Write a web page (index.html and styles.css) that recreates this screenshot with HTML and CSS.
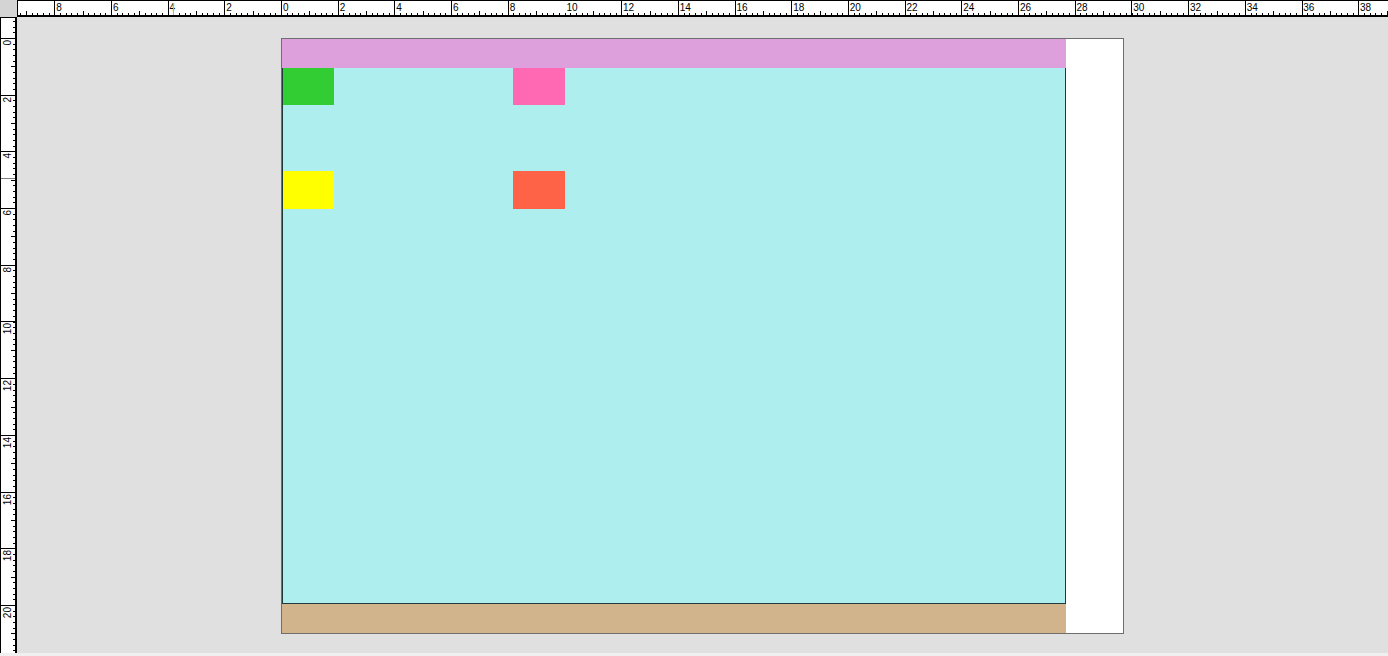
FILE: index.html
```html
<!DOCTYPE html>
<html>
<head>
<meta charset="utf-8">
<title>Page layout</title>
<link rel="stylesheet" href="styles.css">
</head>
<body>
<div class="app">
  <div class="corner"></div>
  <div class="ruler-top">
    <div class="labels-h">
      <span class="lab-h">8</span><span class="lab-h">6</span><span class="lab-h">4</span><span class="lab-h">2</span><span class="lab-h">0</span><span class="lab-h">2</span><span class="lab-h">4</span><span class="lab-h">6</span><span class="lab-h">8</span><span class="lab-h">10</span><span class="lab-h">12</span><span class="lab-h">14</span><span class="lab-h">16</span><span class="lab-h">18</span><span class="lab-h">20</span><span class="lab-h">22</span><span class="lab-h">24</span><span class="lab-h">26</span><span class="lab-h">28</span><span class="lab-h">30</span><span class="lab-h">32</span><span class="lab-h">34</span><span class="lab-h">36</span><span class="lab-h">38</span>
    </div>
    <div class="marker-h"></div>
  </div>
  <div class="ruler-left">
    <div class="labels-v">
      <span class="lab-v"><span class="txt-v">0</span></span><span class="lab-v"><span class="txt-v">2</span></span><span class="lab-v"><span class="txt-v">4</span></span><span class="lab-v"><span class="txt-v">6</span></span><span class="lab-v"><span class="txt-v">8</span></span><span class="lab-v"><span class="txt-v">10</span></span><span class="lab-v"><span class="txt-v">12</span></span><span class="lab-v"><span class="txt-v">14</span></span><span class="lab-v"><span class="txt-v">16</span></span><span class="lab-v"><span class="txt-v">18</span></span><span class="lab-v"><span class="txt-v">20</span></span>
    </div>
    <div class="marker-v"></div>
  </div>
  <div class="canvas">
    <div class="page">
      <div class="sheet">
        <div class="band band-top"></div>
        <div class="body-area">
          <div class="row row-1">
            <div class="cell green"></div>
            <div class="cell pink"></div>
          </div>
          <div class="row row-2">
            <div class="cell yellow"></div>
            <div class="cell tomato"></div>
          </div>
        </div>
        <div class="band band-bottom"></div>
      </div>
      <div class="margin-right"></div>
    </div>
  </div>
  <div class="strip"></div>
</div>
</body>
</html>
```

FILE: styles.css
```css
html, body {
  margin: 0;
  padding: 0;
  overflow: hidden;
  background: #e0e0e0;
}

.app {
  width: 1388px;
  height: 656px;
  display: grid;
  grid-template-columns: 17px 1fr;
  grid-template-rows: 17px 636px 3px;
  font-family: "Liberation Sans", Arial, sans-serif;
  font-size: 10px;
  color: #000;
}

.corner {
  background: #d4d4d4;
}

/* ---------- horizontal ruler ---------- */
.ruler-top {
  position: relative;
  overflow: hidden;
  box-sizing: border-box;
  border-top: 1px solid #000;
  border-left: 1px solid #000;
  border-bottom: 2px solid #000;
  background-color: #fff;
  background-image:
    repeating-linear-gradient(to right, transparent 0 36.2px, #000 36.2px 37.2px, transparent 37.2px 56.7px),
    repeating-linear-gradient(to right, transparent 0 7.85px, #000 7.85px 8.85px, transparent 8.85px 56.7px),
    repeating-linear-gradient(to right, transparent 0 2.18px, #000 2.18px 3.18px, transparent 3.18px 5.67px);
  background-size: 100% 100%, 100% 4px, 100% 2px;
  background-position: 0 0, 0 100%, 0 100%;
  background-repeat: no-repeat;
}

.labels-h {
  display: flex;
  padding-left: 36.2px;
  height: 14px;
  white-space: nowrap;
}

.lab-h {
  flex: none;
  width: 56.7px;
  box-sizing: border-box;
  padding-left: 2px;
  line-height: 14px;
}

.marker-h {
  position: absolute;
  left: 155px;
  top: 2px;
  width: 1px;
  height: 12px;
  background: #c8c800;
}

/* ---------- vertical ruler ---------- */
.ruler-left {
  position: relative;
  overflow: hidden;
  box-sizing: border-box;
  border-top: 1px solid #000;
  border-left: 1px solid #000;
  border-right: 2px solid #000;
  background-color: #fff;
  background-image:
    repeating-linear-gradient(to bottom, transparent 0 20px, #000 20px 21px, transparent 21px 56.7px),
    repeating-linear-gradient(to bottom, transparent 0 48.35px, #000 48.35px 49.35px, transparent 49.35px 56.7px),
    repeating-linear-gradient(to bottom, transparent 0 2.99px, #000 2.99px 3.99px, transparent 3.99px 5.67px);
  background-size: 100% 100%, 4px 100%, 2px 100%;
  background-position: 0 0, 100% 0, 100% 0;
  background-repeat: no-repeat;
}

.labels-v {
  display: flex;
  flex-direction: column;
  padding-top: 20px;
}

.lab-v {
  flex: none;
  height: 56.7px;
  box-sizing: border-box;
  padding-top: 2px;
  padding-left: 1px;
  display: flex;
  align-items: flex-start;
}

.txt-v {
  writing-mode: vertical-rl;
  transform: rotate(180deg);
  line-height: 11px;
  white-space: nowrap;
}

.marker-v {
  position: absolute;
  left: 0;
  top: 160px;
  width: 14px;
  height: 1px;
  background: #808080;
}

/* ---------- canvas & page ---------- */
.canvas {
  background: #e0e0e0;
  padding: 21px 0 0 264px;
  overflow: hidden;
}

.page {
  display: flex;
  width: 841px;
  height: 594px;
  border: 1px solid #6e6e6e;
  background: #fff;
}

.sheet {
  width: 784px;
  display: flex;
  flex-direction: column;
}

.band {
  height: 29px;
  flex: none;
}

.band-top {
  background: #dda0dd;
}

.band-bottom {
  background: #d2b48c;
}

.body-area {
  flex: none;
  height: 536px;
  box-sizing: border-box;
  background: #afeeee;
  border-left: 1px solid #1f3a3a;
  border-right: 1px solid #1f3a3a;
  border-bottom: 1px solid #1f3a3a;
  display: flex;
  flex-direction: column;
}

.row {
  display: flex;
  gap: 179px;
}

.row-1 {
  height: 37px;
  margin-bottom: 66px;
}

.row-2 {
  height: 38px;
}

.cell {
  height: 100%;
}

.green {
  width: 51px;
  background: #32cd32;
}

.yellow {
  width: 51px;
  background: #ffff00;
}

.pink {
  width: 52px;
  background: #ff69b4;
}

.tomato {
  width: 52px;
  background: #ff6347;
}

.margin-right {
  flex: 1;
  background: #fff;
}

.strip {
  grid-column: 1 / 3;
  background: #f0f0f0;
}
```
